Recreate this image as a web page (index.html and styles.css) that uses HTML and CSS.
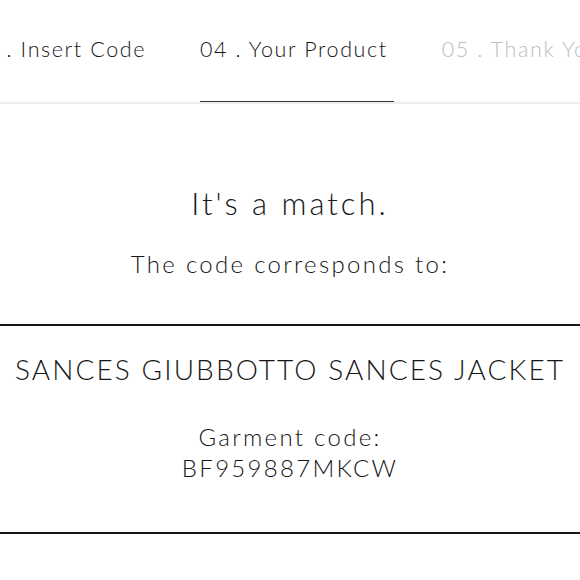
FILE: index.html
```html
<!DOCTYPE html>
<html lang="en">
  <head>
    <meta charset="UTF-8" />
    <meta name="viewport" content="width=device-width, initial-scale=1.0" />
    <title>Your Product</title>
    <link rel="stylesheet" href="styles.css">
  </head>
  <body>
    <nav class="steps">
      <div class="steps-track">
        <div class="step done">03 . Insert Code</div>
        <div class="step active">04 . Your Product</div>
        <div class="step">05 . Thank You</div>
      </div>
    </nav>

    <main class="result">
      <h2>It's a match.</h2>
      <p class="subtitle">The code corresponds to:</p>

      <div class="product">
        <h3>SANCES GIUBBOTTO SANCES JACKET</h3>
        <p class="code">
          Garment code:<br />
          BF959887MKCW
        </p>
      </div>
    </main>
  </body>
</html>
```

FILE: styles.css
```css
* {
  margin: 0;
  padding: 0;
  box-sizing: border-box;
}

body {
  font-family: Lato, "Liberation Sans", sans-serif;
  font-weight: 300;
  background-color: #fff;
  color: #161616;
  overflow: hidden;
}

.steps {
  border-bottom: 2px solid #ededed;
  height: 104px;
  overflow: hidden;
}

.steps-track {
  display: flex;
  justify-content: center;
  gap: 48px;
  height: 100%;
  padding-right: 2px;
}

.step {
  flex: none;
  display: flex;
  align-items: center;
  padding: 0 6px 4px 0;
  font-size: 21.5px;
  letter-spacing: 1.6px;
  color: #bdbdbd;
  white-space: nowrap;
  border-bottom: 3px solid transparent;
  margin-bottom: -2px;
}

.step.done {
  color: #161616;
}

.step.active {
  color: #161616;
  border-bottom-color: #333;
}

.result {
  text-align: center;
  padding-top: 79px;
}

.result h2 {
  font-weight: 300;
  font-size: 31px;
  letter-spacing: 3px;
  line-height: 40px;
}

.subtitle {
  font-size: 24px;
  letter-spacing: 2.3px;
  margin-top: 26px;
  line-height: 30px;
}

.product {
  margin-top: 45px;
  border-top: 2px solid #161616;
  border-bottom: 2px solid #161616;
  padding: 23px 0 49px;
}

.product h3 {
  font-weight: 300;
  font-size: 28px;
  letter-spacing: 2.1px;
  line-height: 40px;
  white-space: nowrap;
}

.code {
  margin-top: 32px;
  font-size: 24px;
  letter-spacing: 2.3px;
  line-height: 31px;
}
```
